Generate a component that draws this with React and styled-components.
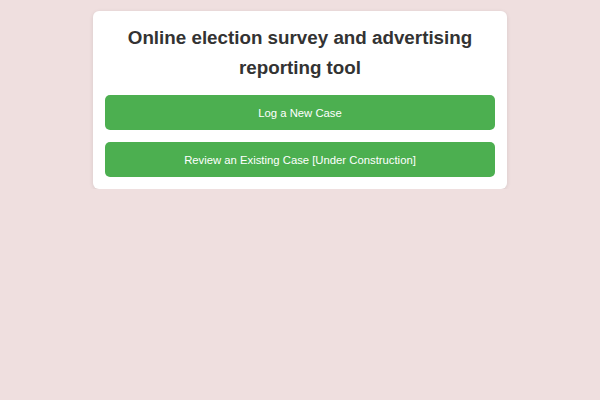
import React from 'react';
import styled, { createGlobalStyle } from 'styled-components';

const GlobalStyle = createGlobalStyle`
body {
  margin: 0;
  background: #efdfdf;
  font-family: "Liberation Sans", Arial, sans-serif;
}
`;

const Page = styled.div`
display: flex;
justify-content: center;
padding-top: 11px;
`;

const Card = styled.div`
width: 414px;
box-sizing: border-box;
background: #fff;
border-radius: 6px;
padding: 12px;
box-shadow: 0 1px 4px rgba(0, 0, 0, 0.1);
display: flex;
flex-direction: column;
gap: 12px;
`;

const Title = styled.h1`
margin: 0;
font-size: 18.8px;
line-height: 30px;
font-weight: bold;
color: #333;
text-align: center;
`;

const ActionButton = styled.button`
height: 35px;
border: none;
border-radius: 5px;
background: #4caf50;
color: #fff;
font-family: "Liberation Sans", Arial, sans-serif;
font-size: 11.3px;
cursor: pointer;
`;

const App = () => {
  return (
    <>
      <GlobalStyle />
      <Page>
        <Card>
          <Title>Online election survey and advertising reporting tool</Title>
          <ActionButton>Log a New Case</ActionButton>
          <ActionButton>Review an Existing Case [Under Construction]</ActionButton>
        </Card>
      </Page>
    </>
  );
};

export default App;
